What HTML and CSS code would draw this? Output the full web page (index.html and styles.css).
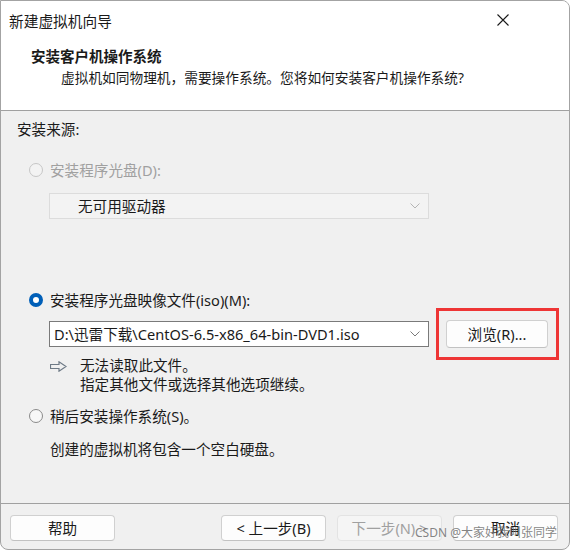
FILE: index.html
```html
<!DOCTYPE html>
<html lang="zh-CN">
<head>
  <meta charset="UTF-8" />
  <title>新建虚拟机向导</title>
  <link rel="stylesheet" href="styles.css">
</head>
<body>
  <div class="window">
    <div class="titlebar">
      <span class="title">新建虚拟机向导</span>
      <svg class="close" width="12" height="12" viewBox="0 0 12 12">
        <path d="M0.5 0.5 L11.5 11.5 M11.5 0.5 L0.5 11.5" stroke="#1a1a1a" stroke-width="1.1" fill="none"/>
      </svg>
    </div>

    <div class="header">
      <div class="header-title">安装客户机操作系统</div>
      <div class="header-sub">虚拟机如同物理机，需要操作系统。您将如何安装客户机操作系统?</div>
    </div>

    <div class="content">
      <div class="source-label">安装来源:</div>

      <div class="option option-disc disabled">
        <span class="radio"></span>
        <span>安装程序光盘(D):</span>
      </div>
      <div class="combo combo-disabled">
        <span class="combo-text">无可用驱动器</span>
        <svg class="chevron" width="10" height="6" viewBox="0 0 10 6"><path d="M0.5 0.5 L5 5 L9.5 0.5" stroke="#b4b4b4" fill="none"/></svg>
      </div>

      <div class="option option-iso">
        <span class="radio checked"></span>
        <span>安装程序光盘映像文件(iso)(M):</span>
      </div>
      <div class="iso-row">
        <div class="combo combo-iso">
          <span class="combo-text">D:\迅雷下载\CentOS-6.5-x86_64-bin-DVD1.iso</span>
          <svg class="chevron" width="10" height="6" viewBox="0 0 10 6"><path d="M0.5 0.5 L5 5 L9.5 0.5" stroke="#7a7a7a" fill="none"/></svg>
        </div>
        <div class="browse-wrap">
          <button class="btn btn-browse">浏览(R)...</button>
        </div>
      </div>

      <div class="message">
        <svg class="msg-arrow" width="17" height="11" viewBox="0 0 17 11">
          <path d="M0.5 3.5 H9 V0.8 L16 5.5 L9 10.2 V7.5 H0.5 Z" stroke="#6e7a86" stroke-width="1.2" fill="none" stroke-linejoin="miter"/>
        </svg>
        <div class="msg-text">
          <div>无法读取此文件。</div>
          <div>指定其他文件或选择其他选项继续。</div>
        </div>
      </div>

      <div class="option option-later">
        <span class="radio"></span>
        <span>稍后安装操作系统(S)。</span>
      </div>
      <div class="desc">创建的虚拟机将包含一个空白硬盘。</div>
    </div>

    <div class="footer">
      <button class="btn">帮助</button>
      <div class="footer-right">
        <button class="btn">&lt; 上一步(B)</button>
        <button class="btn btn-disabled">下一步(N) &gt;</button>
        <button class="btn">取消</button>
      </div>
      <span class="watermark">CSDN @大家好我叫张同学</span>
    </div>
  </div>
</body>
</html>
```

FILE: styles.css
```css
body {
  margin: 0;
  background: #ffffff;
  font-family: "Noto Sans", "Noto Sans CJK SC", sans-serif;
  font-size: 14.6px;
  color: #1a1a1a;
}
.window {
  width: 570px;
  height: 550px;
  box-sizing: border-box;
  border: 1px solid #a3a3a3;
  border-radius: 0 8px 8px 8px;
  background: #f0f0f0;
  display: flex;
  flex-direction: column;
  overflow: hidden;
}
.titlebar {
  height: 39px;
  background: #ffffff;
  display: flex;
  align-items: center;
  justify-content: space-between;
  padding: 0 60px 0 8px;
}
.title {
  font-size: 14.7px;
  line-height: 20px;
  color: #1a1a1a;
}
.close {
  display: block;
  margin-top: -2px;
}
.header {
  height: 70px;
  background: #ffffff;
  border-bottom: 1px solid #a0a0a0;
  padding-left: 30px;
}
.header-title {
  margin-top: 6px;
  font-weight: bold;
  font-size: 14.5px;
  line-height: 20px;
}
.header-sub {
  margin-top: 1px;
  padding-left: 30px;
  font-size: 13.7px;
  line-height: 21px;
}
.content {
  flex: 1;
  padding-left: 16px;
}
.source-label {
  margin-top: 8px;
  line-height: 20px;
}
.option {
  display: flex;
  align-items: center;
  line-height: 20px;
  margin-left: 12px;
}
.option .radio {
  margin-right: 7px;
}
.option-disc {
  margin-top: 21px;
}
.option-iso {
  margin-top: 71px;
}
.option-later {
  margin-top: 12px;
}
.disabled {
  color: #a0a0a0;
}
.radio {
  width: 14px;
  height: 14px;
  box-sizing: border-box;
  border-radius: 50%;
  border: 1px solid #8a8a8a;
  background: #f7f7f7;
  flex: none;
}
.disabled .radio {
  border-color: #c6c6c6;
  background: #f3f3f3;
}
.radio.checked {
  border: 4px solid #005fb8;
  background: #ffffff;
}
.combo {
  width: 380px;
  height: 26px;
  box-sizing: border-box;
  display: flex;
  align-items: center;
  justify-content: space-between;
  border: 1px solid #7a7a7a;
  background: #ffffff;
  padding: 0 8px 0 4px;
}
.combo-disabled {
  margin: 13px 0 0 32px;
  border-color: #dcdcdc;
  background: #f3f3f3;
}
.combo-disabled .combo-text {
  padding-left: 24px;
  color: #1a1a1a;
}
.combo-text {
  line-height: 20px;
  white-space: nowrap;
}
.chevron {
  display: block;
}
.iso-row {
  display: flex;
  align-items: center;
  margin: 10px 0 0 32px;
}
.browse-wrap {
  position: relative;
  margin-left: 17px;
}
.browse-wrap::after {
  content: "";
  position: absolute;
  left: -10px;
  right: -11px;
  top: -12px;
  bottom: -12px;
  border: 3px solid #ee3535;
}
.btn {
  width: 105px;
  height: 26px;
  box-sizing: border-box;
  border: 1px solid #d0d0d0;
  border-bottom-color: #c2c2c2;
  border-radius: 4px;
  background: #fdfdfd;
  font-family: inherit;
  font-size: 14.6px;
  color: #1a1a1a;
  padding: 0;
  line-height: 20px;
}
.btn-browse {
  width: 102px;
  height: 28px;
  display: block;
}
.btn-disabled {
  background: #f5f5f5;
  border-color: #e3e3e3;
  color: #a0a0a0;
}
.message {
  display: flex;
  margin: 8px 0 0 33px;
}
.msg-arrow {
  display: block;
  margin-top: 5px;
  margin-right: 13px;
}
.msg-text {
  line-height: 19px;
}
.desc {
  margin: 13px 0 0 33px;
  line-height: 20px;
}
.footer {
  position: relative;
  height: 46px;
  border-top: 1px solid #a0a0a0;
  display: flex;
  justify-content: space-between;
  padding: 11px 11px 0 9px;
  box-sizing: border-box;
}
.footer-right {
  display: flex;
  gap: 11px;
}
.watermark {
  position: absolute;
  right: 12px;
  top: 21px;
  font-size: 12px;
  line-height: 16px;
  color: rgba(110, 110, 110, 0.85);
  white-space: nowrap;
}
```
